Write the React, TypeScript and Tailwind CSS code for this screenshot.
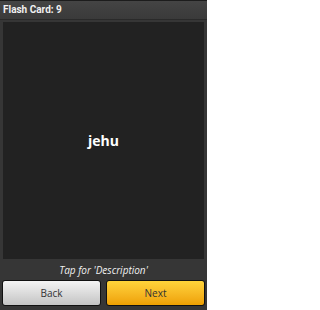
import React from "react";

export default function App() {
  return (
    <div
      className="w-[207px] h-[310px] bg-[#363636] flex flex-col overflow-hidden"
      style={{ fontFamily: '"Open Sans", "DejaVu Sans", sans-serif' }}
    >
      <div className="h-[20px] border-t border-[#1c1c1c] bg-gradient-to-b from-[#444] to-[#3a3a3a] border-b border-b-[#2a2a2a] flex items-center px-[3px]">
        <span
          className="text-[10px] font-bold text-[#f0f0f0] leading-none"
          style={{ fontFamily: 'Roboto, "Open Sans", sans-serif' }}
        >
          Flash Card: 9
        </span>
      </div>
      <div className="flex-1 flex flex-col px-[3px] pt-[2px]">
        <div className="h-[237px] bg-[#222222] flex items-center justify-center">
          <span className="text-[14px] font-bold text-white leading-none">jehu</span>
        </div>
        <div className="h-[21px] flex items-center justify-center">
          <span className="text-[10px] italic text-[#f0f0f0] leading-none">Tap for 'Description'</span>
        </div>
        <div className="flex gap-[5px] -mx-[1px]">
          <button className="flex-1 h-[26px] rounded-[3px] border border-[#111] bg-gradient-to-b from-[#f4f4f4] to-[#c4c4c4] text-[10px] text-[#333]">
            Back
          </button>
          <button className="flex-1 h-[26px] rounded-[3px] border border-[#111] bg-gradient-to-b from-[#ffd43a] to-[#eea000] text-[10px] text-[#333]">
            Next
          </button>
        </div>
      </div>
    </div>
  );
}
